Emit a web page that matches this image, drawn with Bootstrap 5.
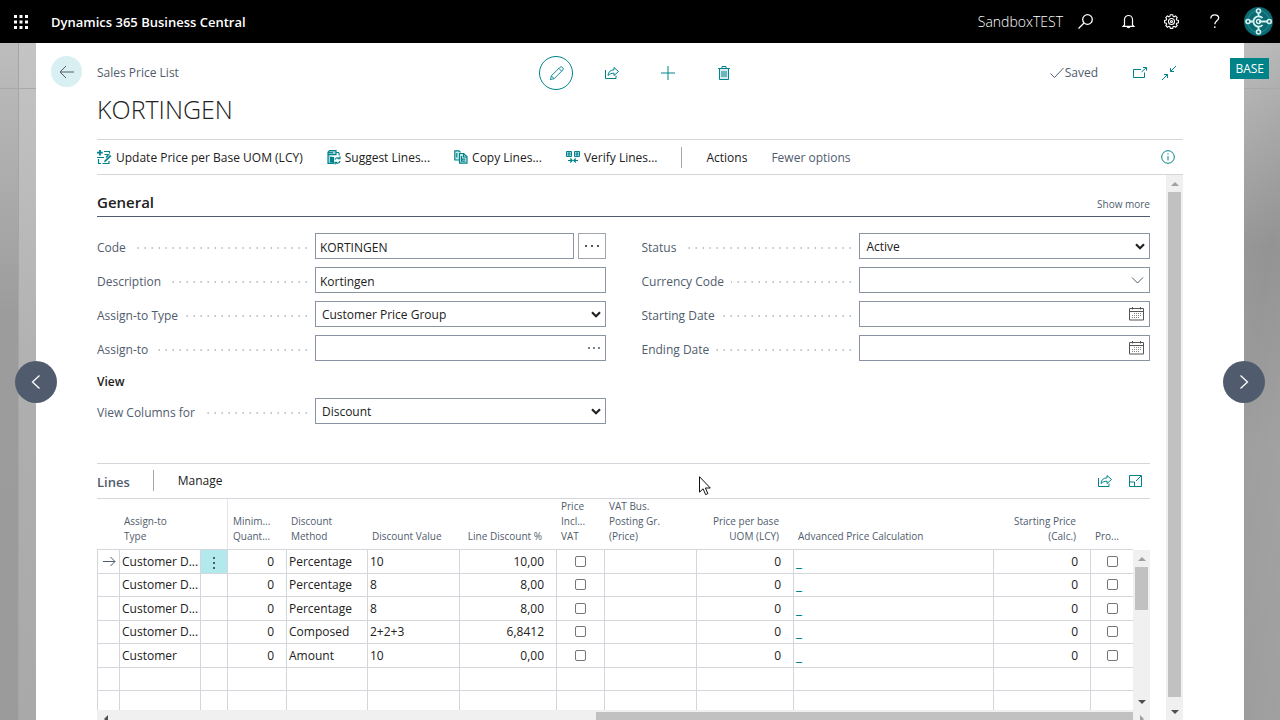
<!DOCTYPE html>
<html lang="en">
<head>
<meta charset="utf-8">
<meta name="viewport" content="width=device-width, initial-scale=1">
<title>Sales Price List - KORTINGEN - Dynamics 365 Business Central</title>
<link href="https://cdn.jsdelivr.net/npm/bootstrap@5.3.0/dist/css/bootstrap.min.css" rel="stylesheet">
<style>
:root{--teal:#00838a;--slate:#505c6d;--ink:#212121;--line:#d3d6da;--field:#8b94a3}
body{font-family:"Open Sans","Noto Sans",sans-serif;font-size:12px;line-height:16px;color:var(--ink);background:#a0a0a0}
svg{display:block;flex:none;fill:none;stroke:currentColor}
button{color:inherit}
.app{height:100vh}
.topbar{height:43px;font-size:14px;padding-left:14px}
.topbar .btn,.plain{padding:0;border:0;border-radius:0;color:inherit;font-size:inherit;line-height:inherit;background:none}
.brand-name{font-size:13px;font-weight:600;margin-left:23px}
.env{font-weight:300;margin-right:15px}
.tools{gap:28px}
.backdrop-area{background:linear-gradient(180deg,#bdbdbd,#9c9c9c 40%,#9b9b9b);padding:0 36px}
.backdrop-area::before{content:"";position:absolute;inset:0 18px;border-left:1px solid #a5a5a5;background:linear-gradient(180deg,#c4c4c4,#aeaeae 55%,#a9a9a9)}
.backdrop-area::after{content:"";position:absolute;left:0;right:0;top:45px;height:1px;background:#a9a9a9}
.right-shade{position:absolute;right:0;top:0;bottom:0;width:36px;background:linear-gradient(100deg,transparent 0,#0000000d 40%,transparent),linear-gradient(180deg,#bdbdbd,#9b9b9b 30%,#a6a6a6 60%,#a0a0a0)}
.sheet{position:relative;z-index:1;padding:0 61px}
.titlebar{display:grid;grid-template-columns:1fr auto 1fr;height:34px;margin-top:13px}
.back{width:31px;height:31px;background:#d8f0f1;left:15px;top:13px;color:#505c6d}
.slate{color:var(--slate)}
.teal{color:var(--teal)}
.round-tool{width:34px;height:34px}
.ringed{border:1px solid var(--teal)}
.record-title{font-size:25px;line-height:34px;font-weight:300;margin:2px 0 13px}
.actionbar{height:36px;border-top:1px solid var(--line);border-bottom:1px solid var(--line);gap:24px;padding-right:8px}
.actionbar .plain{gap:4px}
.actionbar .words{padding-top:2px}
.rule{width:1px;height:21px;background:#a0a7b2}
.content-col{padding-right:16px}
.fasttab{height:42px;border-bottom:1px solid var(--slate);padding-top:17px}
.fasttab h2{font-size:15px;line-height:20px;font-weight:600;margin:0}
.tiny{font-size:10px}
.fields{display:grid;grid-template-columns:1fr 1fr;column-gap:36px;padding:16px 0 39px}
.frow{display:grid;grid-template-columns:3fr 4fr;height:26px;margin-bottom:8px;align-items:center}
.frow label{color:var(--slate);display:flex;align-items:center;padding-right:8px;padding-top:4px}
.leader{flex:1;height:2px;margin-left:7px;background:repeating-linear-gradient(270deg,#c5c8cd 0 1px,#dcdee1 1px 2px,transparent 2px 7px)}
.frow .form-control,.frow .form-select{border:1px solid var(--field);border-radius:0;height:26px;padding:2px 4px 0;font-size:12px;line-height:16px;color:var(--ink);background-color:#fff}
.frow .form-select{padding:1px 24px 0 6px;background:#fff url("data:image/svg+xml,%3Csvg xmlns='http://www.w3.org/2000/svg' width='10' height='7'%3E%3Cpath d='M1 1.2l4 4 4-4' fill='none' stroke='%23212121' stroke-width='2.2'/%3E%3C/svg%3E") no-repeat right 4px center;background-size:10px 7px}
.inside{position:absolute;right:6px;top:6px}
.more-box{width:28px;height:26px;border:1px solid #a0a4ab}
.view-h{font-size:12px;line-height:16px;font-weight:600;margin:13px 0 8px}
.linesbar{height:36px;border-top:1px solid var(--line);border-bottom:1px solid var(--line);padding-right:8px}
.linesbar h2{font-size:13px;line-height:18px;font-weight:600;margin:0;padding-top:2px}
.sb{background:#f0f0f0;flex:none;width:17px}
.arr{width:0;height:0;border:4px solid transparent;border-top-width:0;border-bottom-color:#505050}
.arr.off{border-bottom-color:#a0a0a0}
.arr.down{transform:rotate(180deg)}
.arr.west{transform:rotate(270deg)}
.arr.east{transform:rotate(90deg)}
.arrbox{width:17px;height:17px;flex:none}
.thumb{background:#c1c1c1}
.gridbox{height:211px}
.lines{table-layout:fixed;width:100%;border-collapse:separate;border-spacing:0}
.lines th{height:51px;vertical-align:bottom;font-size:10px;line-height:15px;font-weight:400;color:var(--slate);padding:0 13px 5px 5px;border-bottom:1px solid var(--line);white-space:nowrap;overflow:hidden}
.lines th.n{padding:0 14px 5px 0;text-align:right}
.lines td{height:23px;line-height:16px;border-left:1px solid var(--line);border-bottom:1px solid var(--line);padding:3px 2px 0 2px;white-space:nowrap;overflow:hidden;vertical-align:top}
.lines tr:nth-child(odd) td{height:24px;padding-top:4px}
.lines td.n{text-align:right;padding-right:12px}
.lines th.split{border-left:1px solid #e3e5e8}
.lines td.sel{background:#b2e9ec}
.lines input{appearance:none;display:block;width:11px;height:11px;margin:2px auto 0;border:1px solid #767676;border-radius:2px;background:#fff}
.lines a{color:var(--teal);text-decoration:none;font-size:14px;font-weight:600}
.pager{position:absolute;z-index:3;width:42px;height:42px;top:50%;transform:translateY(-50%);background:var(--slate);color:#fff}
.base-tag{position:absolute;z-index:3;right:11px;top:15px;height:21px;background:#008489;color:#fff;padding:3px 5px;border-radius:0;font-weight:400;font-size:12px;line-height:16px}
.pointer{position:absolute;z-index:4;left:699px;top:476px}
</style>
</head>
<body>
<svg width="0" height="0" class="position-absolute" aria-hidden="true">
<symbol id="i-share" viewBox="0 0 16 14"><path d="M1.500 4v8.500h10.500v-3M4 9.500c.3-3.500 2.300-5.500 6-5.700V1.500l4.500 4-4.500 4V7.200c-2.600 0-4.500.7-6 2.300z"/></symbol>
<symbol id="i-cal" viewBox="0 0 15 14"><path d="M.5 1.500h14v11.500H.5zM.5 4.500h14" stroke="#555"/><path d="M3.500 0v2.500M11.500 0v2.500" stroke="#555"/><path d="M5 6.500h8M3 8.500h10M3 10.500h8" stroke="#888" stroke-dasharray="1 1"/></symbol>
</svg>

<div class="app d-flex flex-column overflow-hidden position-relative">
<header class="topbar bg-black text-white d-flex align-items-center flex-shrink-0">
  <button class="btn" aria-label="App launcher"><svg width="14" height="14" viewBox="0 0 14 14" style="stroke:none;fill:#fff"><path d="M0 0h3v3H0zM5.500 0h3v3h-3zM11 0h3v3h-3zM0 5.500h3v3H0zM5.500 5.500h3v3h-3zM11 5.500h3v3h-3zM0 11h3v3H0zM5.500 11h3v3h-3zM11 11h3v3h-3z"/></svg></button>
  <span class="brand-name">Dynamics 365 Business Central</span>
  <span class="env ms-auto">SandboxTEST</span>
  <div class="tools d-flex align-items-center">
    <button class="btn" aria-label="Search"><svg width="15" height="15" viewBox="0 0 15 15" stroke-width="1.300"><circle cx="9.500" cy="5.500" r="4.800"/><path d="M6 9L.5 14.500"/></svg></button>
    <button class="btn" aria-label="Notifications"><svg width="15" height="15" viewBox="0 0 15 15" stroke-width="1.200"><path d="M3.500 11V5.500a4 4 0 0 1 8 0V11l1.300 1.300H2.200zM6 12.500c.3 1.500 2.700 1.500 3 0"/></svg></button>
    <button class="btn" aria-label="Settings"><svg width="15" height="15" viewBox="0 0 15 15" stroke-width="1.100"><path d="M6.300.7h2.400l.4 1.700 1 .4 1.500-.9 1.600 1.600-.9 1.500.4 1 1.700.4v2.300l-1.700.4-.4 1 .9 1.500-1.600 1.600-1.500-.9-1 .4-.4 1.700H6.300l-.4-1.700-1-.4-1.500.9-1.600-1.600.9-1.500-.4-1L.6 8.700V6.400l1.700-.4.4-1-.9-1.500 1.600-1.600 1.500.9 1-.4z"/><circle cx="7.500" cy="7.500" r="3"/><circle cx="7.500" cy="7.500" r="1"/></svg></button>
    <button class="btn" aria-label="Help"><svg width="15" height="15" viewBox="0 0 15 15" stroke-width="1.300"><path d="M3.800 4.500C3.800-.2 11.700-.2 11.700 4c0 2.600-3.900 3.200-3.900 6.300M7.800 12.300v1.700"/></svg></button>
  </div>
  <button class="btn rounded-circle" style="margin:0 7px 0 22px" aria-label="Account"><svg width="29" height="29" viewBox="0 0 29 29" stroke="#d9f2f2"><circle cx="14.500" cy="14.500" r="14.500" fill="#0b6b73" stroke="none"/><circle cx="14.500" cy="14.500" r="11" stroke="#2f8d93"/><path d="M14.500 6v4M14.500 19v4M5 14.500h4.500M15 14.500h9" stroke="#d9f2f2" stroke-width="1.800"/><path d="M18.500 11a5.200 5.200 0 1 0 0 7" stroke="#d9f2f2" stroke-width="1.800"/><circle cx="14.500" cy="14.500" r="2" stroke="#d9f2f2" stroke-width="1.400"/><g fill="#0b6b73" stroke="#d9f2f2" stroke-width="1.600"><circle cx="14.500" cy="4" r="2"/><circle cx="14.500" cy="25" r="2"/><circle cx="4" cy="14.500" r="2"/><circle cx="25.300" cy="14.500" r="2"/></g></svg></button>
</header>

<div class="backdrop-area position-relative flex-grow-1 d-flex overflow-hidden">
  <div class="right-shade"></div>
  <span class="badge base-tag">BASE</span>
  <button class="btn p-0 rounded-circle pager d-flex align-items-center justify-content-center" style="left:15px" aria-label="Previous record"><svg width="16" height="16" viewBox="0 0 16 16" stroke-width="1.300"><path d="M11.500 1.500L4.500 8l7 6.500"/></svg></button>
  <button class="btn p-0 rounded-circle pager d-flex align-items-center justify-content-center" style="right:15px" aria-label="Next record"><svg width="16" height="16" viewBox="0 0 16 16" stroke-width="1.300"><path d="M4.500 1.500l7 6.500-7 6.500"/></svg></button>

  <main class="sheet bg-white flex-grow-1 d-flex flex-column">
    <button class="btn p-0 rounded-circle border-0 back position-absolute d-flex align-items-center justify-content-center" aria-label="Back"><svg width="16" height="14" viewBox="0 0 16 14"><path d="M15 7H1.500M7 1L1 7l6 6"/></svg></button>
    <div class="titlebar align-items-center">
      <span class="slate">Sales Price List</span>
      <div class="d-flex teal" style="gap:22px">
        <button class="plain round-tool ringed rounded-circle d-flex align-items-center justify-content-center" aria-label="Edit"><svg width="15" height="15" viewBox="0 0 16 16"><path d="M1.500 14.500l1-4L11.500 1.500a2 2 0 0 1 3 3L5.500 13.500zM2.500 10.500l3 3M10.500 2.500l3 3"/></svg></button>
        <button class="plain round-tool d-flex align-items-center justify-content-center" aria-label="Share"><svg width="16" height="14"><use href="#i-share"/></svg></button>
        <button class="plain round-tool d-flex align-items-center justify-content-center" aria-label="New"><svg width="14" height="14" viewBox="0 0 14 14"><path d="M7 0v14M0 7h14"/></svg></button>
        <button class="plain round-tool d-flex align-items-center justify-content-center" aria-label="Delete"><svg width="12" height="14" viewBox="0 0 12 14"><path d="M1.500 2.500h9v11h-9z" fill="#d5ebec"/><path d="M0 2.500h12M4 2.500v-2h4v2M4 5v6M6 5v6M8 5v6"/></svg></button>
      </div>
      <div class="d-flex align-items-center justify-content-end slate" style="padding-right:7px">
        <svg width="14" height="12" viewBox="0 0 14 12"><path d="M.5 6.500l4 4L13.500 1"/></svg>
        <span style="margin-right:34px;padding-left:1px">Saved</span>
        <button class="plain teal" style="margin-right:15px" aria-label="Open in new window"><svg width="15" height="12" viewBox="0 0 15 12"><path d="M9 2.500H1.500v8h11V5.500M9.500 5L14 1M11 .5h3.500v3"/></svg></button>
        <button class="plain teal" aria-label="Collapse"><svg width="14" height="14" viewBox="0 0 14 14"><path d="M0 14l5.500-5.500M2 8.500h3.500V12M14 0L8.500 5.500M8.500 2v3.500H12"/></svg></button>
      </div>
    </div>
    <h1 class="record-title">KORTINGEN</h1>

    <nav class="actionbar d-flex align-items-center flex-shrink-0" aria-label="Actions">
      <button class="plain d-flex align-items-center"><svg class="teal" width="15" height="15" viewBox="0 0 15 15"><path d="M3 0v5.500M0 2.700h5.700" stroke-width="1.800"/><path d="M7 1.500h5.500v2M0 7.500h7" stroke-width="1.200"/><path d="M1.500 9v4.500H4M5.500 13.500h6.500V11" stroke-width="1.200"/><path d="M14.500 6L9 11.500l-2 1 .8-2.200L13 5z" fill="currentColor" stroke="none"/><path d="M7.500 4.500h4L9 7.500" stroke-width="1.200"/></svg><span class="words">Update Price per Base UOM (LCY)</span></button>
      <button class="plain d-flex align-items-center"><svg class="teal" width="14" height="15" viewBox="0 0 14 15"><path d="M2.500.7H9v4H1V2.200zM1 4.700v8.600h5.500V7" fill="#a8d5d8" stroke-width="1.200"/><path d="M3 7h3.500v5.500H3z" fill="currentColor" stroke="none"/><path d="M1 2.700h5" stroke-width="1.200"/><path d="M9 2.500h2.500c1 1 .7 2 .7 3M8 9.500a3 3 0 0 1 4.500-1.200M13 6.300v2.500h-2.500M13 11a3 3 0 0 1-4.500 1.800M8 14.500v-2.300h2.200" stroke-width="1.100"/></svg><span class="words">Suggest Lines...</span></button>
      <button class="plain d-flex align-items-center"><svg class="teal" width="14" height="14" viewBox="0 0 14 14" stroke-width="1.200"><path d="M5 10H.8V.8H5l1.500 1.500" fill="#cfe8ea"/><path d="M2.800 3v4.500M5.500 3.500h4.200L13 6.800v6.400H5.500z" fill="#cfe8ea"/><path d="M9.500 4v3H13M7.500 6v5.200h3.800M7.500 9.200h3.800"/></svg><span class="words">Copy Lines...</span></button>
      <button class="plain d-flex align-items-center"><svg class="teal" width="14" height="14" viewBox="0 0 14 14"><path d="M.5 1.500h5v5h-5zM8.500 1.500h5v5h-5z" fill="#a8d5d8"/><path d="M1.500 4h3M9.500 4h3M3 2v4M11 2v4"/><path d="M2 10.500h4M4.200 8.500l2 2-2 2M8 10.500h4M9.800 8.500l-2 2 2 2" stroke-width="1.200"/></svg><span class="words">Verify Lines...</span></button>
      <span class="rule"></span>
      <button class="plain words">Actions</button>
      <button class="plain slate words">Fewer options</button>
      <button class="plain teal ms-auto" aria-label="Details"><svg width="14" height="14" viewBox="0 0 14 14"><circle cx="7" cy="7" r="6.300"/><path d="M7 6v4.500M7 3.500v1.200"/></svg></button>
    </nav>

    <div class="d-flex flex-grow-1 overflow-hidden">
      <div class="content-col flex-grow-1" style="min-width:0">
        <section aria-label="General">
          <div class="fasttab d-flex justify-content-between">
            <h2>General</h2><a href="#" class="tiny slate text-decoration-none" style="padding-top:4px">Show more</a>
          </div>
          <div class="fields">
            <div>
              <div class="frow"><label for="code">Code<span class="leader"></span></label><div class="d-flex gap-1"><input id="code" class="form-control" value="KORTINGEN"><button class="plain more-box d-flex align-items-center justify-content-center flex-shrink-0" aria-label="Number series"><svg width="14" height="2" viewBox="0 0 14 2" stroke-width="1.500"><path d="M0 1h2M6 1h2M12 1h2"/></svg></button></div></div>
              <div class="frow"><label for="desc">Description<span class="leader"></span></label><input id="desc" class="form-control" value="Kortingen"></div>
              <div class="frow"><label for="atype">Assign-to Type<span class="leader"></span></label><select id="atype" class="form-select"><option>Customer Price Group</option></select></div>
              <div class="frow"><label for="ato">Assign-to<span class="leader"></span></label><div class="position-relative"><input id="ato" class="form-control"><button class="plain inside slate" style="top:12px" aria-label="Look up"><svg width="12" height="2" viewBox="0 0 12 2" stroke-width="1.500"><path d="M0 1h2M5 1h2M10 1h2"/></svg></button></div></div>
              <h3 class="view-h">View</h3>
              <div class="frow mb-0"><label for="cols">View Columns for<span class="leader"></span></label><select id="cols" class="form-select"><option>Discount</option></select></div>
            </div>
            <div>
              <div class="frow"><label for="status">Status<span class="leader"></span></label><select id="status" class="form-select"><option>Active</option></select></div>
              <div class="frow"><label for="cur">Currency Code<span class="leader"></span></label><div class="position-relative"><input id="cur" class="form-control"><button class="plain inside slate" style="top:10px" aria-label="Choose currency"><svg width="13" height="7" viewBox="0 0 13 7"><path d="M1 .5l5.500 5.500L12 .5"/></svg></button></div></div>
              <div class="frow"><label for="sd">Starting Date<span class="leader"></span></label><div class="position-relative"><input id="sd" class="form-control"><button class="plain inside" aria-label="Pick starting date"><svg width="15" height="14"><use href="#i-cal"/></svg></button></div></div>
              <div class="frow"><label for="ed">Ending Date<span class="leader"></span></label><div class="position-relative"><input id="ed" class="form-control"><button class="plain inside" aria-label="Pick ending date"><svg width="15" height="14"><use href="#i-cal"/></svg></button></div></div>
            </div>
          </div>
        </section>

        <section aria-label="Lines">
          <div class="linesbar d-flex align-items-center">
            <h2 class="slate">Lines</h2><span class="rule" style="margin:0 24px 2px 23px"></span>
            <button class="plain">Manage</button>
            <button class="plain teal ms-auto me-3" aria-label="Share lines"><svg width="16" height="14"><use href="#i-share"/></svg></button>
            <button class="plain teal" aria-label="Focus mode"><svg width="13" height="12" viewBox="0 0 13 12"><path d="M9 .5H.5v11h12V3M.5 7h5v4.500M12.500 4V.5H9M7 6l5-5"/></svg></button>
          </div>
          <div class="gridbox d-flex overflow-hidden">
            <div class="flex-grow-1 overflow-hidden">
              <table class="lines">
                <colgroup><col style="width:22px"><col style="width:81px"><col style="width:27px"><col style="width:59px"><col style="width:81px"><col style="width:92px"><col style="width:97px"><col style="width:48px"><col style="width:92px"><col style="width:97px"><col><col style="width:97px"><col style="width:43px"></colgroup>
                <thead><tr><th></th><th>Assign-to<br>Type</th><th></th><th class="split">Minim...<br>Quant...</th><th>Discount<br>Method</th><th>Discount Value</th><th class="n">Line Discount %</th><th>Price<br>Incl...<br>VAT</th><th>VAT Bus.<br>Posting Gr.<br>(Price)</th><th class="n">Price per base<br>UOM (LCY)</th><th>Advanced Price Calculation</th><th class="n">Starting Price<br>(Calc.)</th><th>Pro...</th></tr></thead>
                <tbody id="rows"></tbody>
              </table>
            </div>
            <div class="sb d-flex flex-column align-items-center" style="margin-top:51px">
              <div class="arrbox d-flex align-items-center justify-content-center"><span class="arr off"></span></div>
              <div class="thumb" style="width:13px;height:43px"></div>
              <div class="arrbox mt-auto d-flex align-items-center justify-content-center"><span class="arr down"></span></div>
            </div>
          </div>
          <div class="sb w-100 d-flex align-items-center" style="height:17px">
            <div class="arrbox d-flex align-items-center justify-content-center"><span class="arr west"></span></div>
            <div class="thumb ms-auto" style="width:51%;height:13px"></div>
            <div class="arrbox d-flex align-items-center justify-content-center"><span class="arr off east"></span></div>
          </div>
        </section>
      </div>
      <div class="sb d-flex flex-column align-items-center">
        <div class="arrbox d-flex align-items-center justify-content-center"><span class="arr off"></span></div>
        <div class="thumb flex-grow-1" style="width:13px;margin-bottom:6px"></div>
        <div class="arrbox d-flex align-items-center justify-content-center"><span class="arr down"></span></div>
      </div>
    </div>
  </main>
</div>
<svg class="pointer" width="12" height="20" viewBox="0 0 12 20"><path d="M.5.700v15.500l3.600-3.400 2.500 5.800 2.300-1-2.500-5.600h4.900z" fill="#fff" stroke="#111"/></svg>
</div>

<script>
const rows = [
  ['Customer D...', 'Percentage', '10', '10,00'],
  ['Customer D...', 'Percentage', '8', '8,00'],
  ['Customer D...', 'Percentage', '8', '8,00'],
  ['Customer D...', 'Composed', '2+2+3', '6,8412'],
  ['Customer', 'Amount', '10', '0,00']
];
const arrow = '<svg width="13" height="11" viewBox="0 0 13 11" style="margin:2px 0 0 3px;color:#505c6d"><path d="M0 5.500h12M7.500 1L12 5.500 7.500 10"/></svg>';
const dots = '<svg width="2" height="12" viewBox="0 0 2 12" stroke-width="2" style="margin:3px auto 0;color:#505c6d"><path d="M1 0v2M1 5v2M1 10v2"/></svg>';
document.getElementById('rows').innerHTML = rows.map(([type, method, value, pct], i) => `<tr>
  <td>${i ? '' : arrow}</td><td>${type}</td><td class="${i ? '' : 'sel'}">${i ? '' : dots}</td><td class="n">0</td>
  <td>${method}</td><td>${value}</td><td class="n">${pct}</td>
  <td><input type="checkbox" aria-label="Price includes VAT, line ${i + 1}"></td><td></td><td class="n">0</td>
  <td><a href="#">_</a></td><td class="n">0</td><td><input type="checkbox" aria-label="Promotion, line ${i + 1}"></td></tr>`).join('')
  + ('<tr>' + '<td></td>'.repeat(13) + '</tr>').repeat(2);
</script>
<script src="https://cdn.jsdelivr.net/npm/bootstrap@5.3.0/dist/js/bootstrap.bundle.min.js"></script>
</body>
</html>
